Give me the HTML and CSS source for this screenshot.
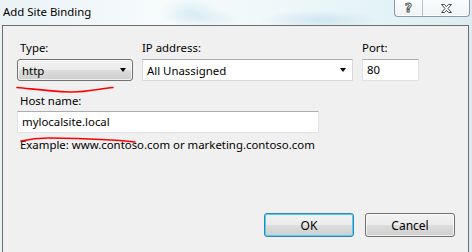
FILE: index.html
```html
<!DOCTYPE html>
<html lang="en">
<head>
  <meta charset="UTF-8" />
  <title>Add Site Binding</title>
  <link rel="stylesheet" href="styles.css">
</head>
<body>
  <div class="window">

    <!-- Title bar -->
    <div class="titlebar">
      <span class="title">Add Site Binding</span>
      <div class="caption-buttons">
        <span class="cap-btn help">?</span>
        <span class="cap-btn close">
          <svg width="13" height="11" viewBox="0 0 13 11">
            <path d="M1.5 1.5h3l2 2.2 2-2.2h3l-3.5 4 3.5 4h-3l-2-2.2-2 2.2h-3l3.5-4z" fill="#fff" stroke="#4d4d4d" stroke-width="1" stroke-linejoin="round"/>
          </svg>
        </span>
      </div>
    </div>

    <!-- Client area -->
    <div class="client">
      <div class="fields">
        <div class="field first">
          <label class="label">Type:</label>
          <div class="combo combo-button">
            <span class="combo-text">http</span>
            <span class="arrow"></span>
          </div>
        </div>
        <div class="field">
          <label class="label">IP address:</label>
          <div class="combo combo-edit">
            <span class="combo-text">All Unassigned</span>
            <span class="arrow"></span>
          </div>
        </div>
        <div class="field">
          <label class="label">Port:</label>
          <div class="textbox port">80</div>
        </div>
      </div>

      <div class="field first host">
        <label class="label">Host name:</label>
        <div class="textbox hostname">mylocalsite.local</div>
      </div>
      <div class="hint">Example: www.contoso.com or marketing.contoso.com</div>

      <div class="buttons">
        <button class="btn default">OK</button>
        <button class="btn">Cancel</button>
      </div>

      <!-- red marker strokes drawn on top of the dialog -->
      <svg class="marks" width="472" height="252" viewBox="0 0 472 252">
        <path d="M17 87.5 C30 88.5 45 91 70 92 C85 92.5 98 89 113 87.5" fill="none" stroke="#f00" stroke-width="1.6" stroke-linecap="round"/>
        <path d="M21 141 C28 139.5 36 138 48 138 C80 138.5 110 139 135 142" fill="none" stroke="#f00" stroke-width="1.6" stroke-linecap="round"/>
      </svg>
    </div>

  </div>
</body>
</html>
```

FILE: styles.css
```css
html, body {
  margin: 0;
  padding: 0;
  background: #f0f0f0;
  font-family: "Noto Sans", "Open Sans", sans-serif;
  font-size: 11.4px;
  color: #000;
}

.window {
  width: 472px;
  height: 252px;
  overflow: hidden;
  display: flex;
  flex-direction: column;
  background: linear-gradient(to right, #eaf2f6 0%, #f7fbfc 35%, #eef7f9 60%, #e2f2f6 85%, #dcecf2 100%);
}

.titlebar {
  height: 25px;
  display: flex;
  align-items: flex-start;
  background:
    radial-gradient(ellipse 60px 10px at 320px 20px, rgba(160, 200, 225, 0.35), transparent),
    radial-gradient(ellipse 40px 10px at 200px 18px, rgba(170, 210, 230, 0.3), transparent),
    radial-gradient(ellipse 30px 12px at 190px 10px, rgba(180, 225, 235, 0.35), transparent);
}

.title {
  padding: 3px 0 0 3px;
  line-height: 17px;
}

.caption-buttons {
  margin-left: auto;
  margin-right: 2px;
  display: flex;
  height: 16px;
  border: 1px solid #8f989f;
  border-top: none;
  border-radius: 0 0 4px 4px;
  background: linear-gradient(#fbfdfe, #eef3f6);
  box-shadow: inset 0 -1px 0 #fff;
}

.cap-btn {
  display: flex;
  align-items: center;
  justify-content: center;
}

.help {
  width: 27px;
  border-right: 1px solid #b8c0c6;
  font-family: "DejaVu Sans", sans-serif;
  font-weight: bold;
  font-size: 12px;
  line-height: 14px;
  color: #fff;
  -webkit-text-stroke: 0.9px #4d4d4d;
}

.close {
  width: 46px;
}

.client {
  position: relative;
  flex: 1;
  margin: 0 3px 0 2px;
  border: 1px solid #6e6e6e;
  border-bottom: none;
  background: #f0f0f0;
  padding: 14px 13px 0 14px;
}

.fields {
  display: flex;
}

.field {
  display: flex;
  flex-direction: column;
  gap: 3px;
}

.fields .field:nth-child(2) {
  margin-left: 9px;
}

.fields .field:nth-child(3) {
  margin-left: 9px;
}

.label {
  line-height: 16px;
}

.field.first .label {
  padding-left: 3px;
}

.combo {
  box-sizing: border-box;
  height: 22px;
  display: flex;
  align-items: center;
  padding: 0 5px 0 4px;
}

.combo-text {
  flex: 1;
}

.combo-button {
  width: 116px;
  border: 1px solid #707070;
  border-radius: 3px;
  background: linear-gradient(#f2f2f2 0%, #ebebeb 50%, #dddddd 51%, #cfcfcf 100%);
  box-shadow: inset 0 0 0 1px rgba(255, 255, 255, 0.7);
}

.combo-edit {
  width: 211px;
  border: 1px solid #d5d8dc;
  border-top-color: #abadb3;
  background: #fff;
}

.arrow {
  width: 0;
  height: 0;
  border-left: 3.5px solid transparent;
  border-right: 3.5px solid transparent;
  border-top: 4px solid #000;
  margin-right: 1px;
}

.textbox {
  box-sizing: border-box;
  height: 22px;
  line-height: 20px;
  padding-left: 4px;
  border: 1px solid #e2e3ea;
  border-top-color: #abadb3;
  background: #fff;
}

.port {
  width: 57px;
}

.host {
  margin-top: 12px;
  gap: 2px;
}

.hostname {
  width: 302px;
}

.hint {
  margin-top: 4px;
  line-height: 16px;
  padding-left: 3px;
}

.buttons {
  display: flex;
  justify-content: flex-end;
  gap: 11px;
  margin-top: 60px;
}

.btn {
  box-sizing: border-box;
  width: 90px;
  height: 24px;
  font-family: inherit;
  font-size: 12px;
  color: #000;
  border: 1px solid #707070;
  border-radius: 3px;
  background: linear-gradient(#f2f2f2 0%, #ebebeb 50%, #dddddd 51%, #cfcfcf 100%);
  box-shadow: inset 0 0 0 1px rgba(255, 255, 255, 0.7);
  padding: 0;
}

.btn.default {
  border-color: #3c7fb1;
  box-shadow: inset 0 0 0 1px #48d3fb;
}

.marks {
  position: absolute;
  left: -3px;
  top: -26px;
  pointer-events: none;
}
```
